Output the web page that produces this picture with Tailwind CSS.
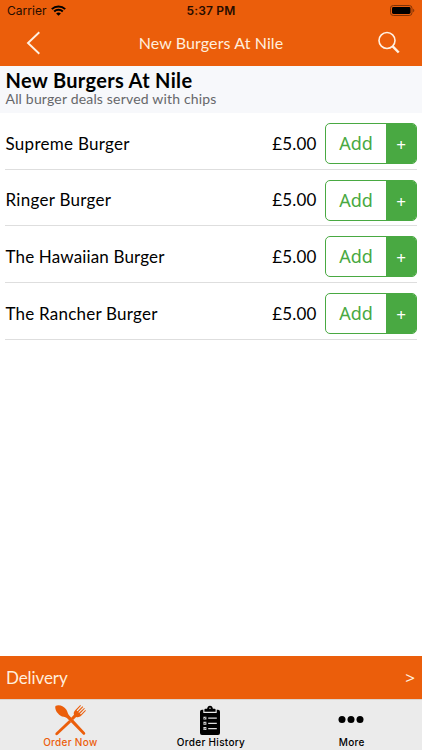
<!DOCTYPE html>
<html lang="en">
<head>
<meta charset="utf-8">
<title>New Burgers At Nile</title>
<script src="https://cdn.jsdelivr.net/npm/@tailwindcss/browser@4"></script>
</head>
<body class="bg-white">
<div class="flex h-[750px] w-[422px] flex-col overflow-hidden bg-white font-['Lato',sans-serif] text-black">
  <header class="h-[65.5px] shrink-0 bg-[#eb5e0b]">
    <div class="grid h-[22px] grid-cols-3 items-center pl-[7px] pr-[7px] font-['Inter',sans-serif] text-[#260c00]">
      <div class="flex items-center gap-[4px] text-[12px] leading-[22px] tracking-[0.05px]">
        <span>Carrier</span>
        <svg class="mb-[2px] h-[11px] w-[15px]" viewBox="0 0 15 11" fill="none" stroke="#000" stroke-width="2"><path d="M.8 4.1C4.5.5 10.5.5 14.2 4.1M3.200 6.500c2.400-2.300 6.200-2.300 8.600 0"/><path d="M7.500 10.800 5.100 8.400c1.400-1.200 3.400-1.200 4.800 0z" fill="#000" stroke="none"/></svg>
      </div>
      <span class="text-center text-[12px] font-semibold leading-[22px] tracking-[0.2px]">5:37 PM</span>
      <svg class="mb-[1px] h-[11px] w-[25px] justify-self-end" viewBox="0 0 25 11"><rect x=".5" y=".5" width="21.500" height="10" rx="2.800" fill="none" stroke="#803307"/><rect x="2" y="2" width="18.500" height="7" rx="1.400"/><path d="M23.200 3.800c1.500.6 1.500 2.800 0 3.400z" fill="#803307"/></svg>
    </div>
    <div class="flex h-[41px] items-center justify-between pl-[26px] pr-[22px]">
      <svg class="h-[24px] w-[15px]" viewBox="0 0 15 24" fill="none" stroke="#fff1e3" stroke-width="1.900"><path d="M13.300 1.200 2 12l11.300 10.800"/></svg>
      <h1 class="ml-[3px] text-[16px] leading-[20px] tracking-[0.1px] text-[#ffeedd]">New Burgers At Nile</h1>
      <svg class="h-[23px] w-[22px]" viewBox="0 0 22 23" fill="none" stroke="#fff1e3"><circle cx="9" cy="9.500" r="8" stroke-width="1.600"/><path d="m14.700 15.300 6 6.200" stroke-width="2.500"/></svg>
    </div>
  </header>
  <section class="h-[47.5px] shrink-0 bg-[#f7f8fb] pl-[5.5px] pt-[3px]">
    <h2 class="text-[20px] font-bold leading-[22px] tracking-[0.32px]">New Burgers At Nile</h2>
    <p class="text-[14px] leading-[16px] tracking-[0.18px] text-[#66676a]">All burger deals served with chips</p>
  </section>
  <main class="flex-1 px-[5px]">
    <div class="flex h-[56.67px] items-center border-b border-[#dedede]">
      <span class="flex-1 pl-[0.5px] pt-[5px] text-[17px] tracking-[0.28px]">Supreme Burger</span>
      <span class="mr-[8.5px] pt-[5px] text-[17px] tracking-[0.15px]">£5.00</span>
      <div class="mt-[5px] flex h-[41px] w-[92px] overflow-hidden rounded-[5px] border border-[#49a942] text-[#49a942]"><span class="flex flex-1 items-center justify-center font-['Noto_Sans'] text-[18px]">Add</span><span class="flex w-[30px] items-center justify-center bg-[#49a942] pt-[2px] font-['Noto_Sans'] text-[17px] text-white">+</span></div>
    </div>
    <div class="flex h-[56.67px] items-center border-b border-[#dedede]">
      <span class="flex-1 pl-[0.5px] pt-[5px] text-[17px] tracking-[0.28px]">Ringer Burger</span>
      <span class="mr-[8.5px] pt-[5px] text-[17px] tracking-[0.15px]">£5.00</span>
      <div class="mt-[6px] flex h-[41px] w-[92px] overflow-hidden rounded-[5px] border border-[#49a942] text-[#49a942]"><span class="flex flex-1 items-center justify-center font-['Noto_Sans'] text-[18px]">Add</span><span class="flex w-[30px] items-center justify-center bg-[#49a942] pt-[2px] font-['Noto_Sans'] text-[17px] text-white">+</span></div>
    </div>
    <div class="flex h-[56.67px] items-center border-b border-[#dedede]">
      <span class="flex-1 pl-[0.5px] pt-[5px] text-[17px] tracking-[0.15px]">The Hawaiian Burger</span>
      <span class="mr-[8.5px] pt-[5px] text-[17px] tracking-[0.15px]">£5.00</span>
      <div class="mt-[5px] flex h-[41px] w-[92px] overflow-hidden rounded-[5px] border border-[#49a942] text-[#49a942]"><span class="flex flex-1 items-center justify-center font-['Noto_Sans'] text-[18px]">Add</span><span class="flex w-[30px] items-center justify-center bg-[#49a942] pt-[2px] font-['Noto_Sans'] text-[17px] text-white">+</span></div>
    </div>
    <div class="flex h-[56.67px] items-center border-b border-[#dedede]">
      <span class="flex-1 pl-[0.5px] pt-[5px] text-[17px] tracking-[0.22px]">The Rancher Burger</span>
      <span class="mr-[8.5px] pt-[5px] text-[17px] tracking-[0.15px]">£5.00</span>
      <div class="mt-[5px] flex h-[41px] w-[92px] overflow-hidden rounded-[5px] border border-[#49a942] text-[#49a942]"><span class="flex flex-1 items-center justify-center font-['Noto_Sans'] text-[18px]">Add</span><span class="flex w-[30px] items-center justify-center bg-[#49a942] pt-[2px] font-['Noto_Sans'] text-[17px] text-white">+</span></div>
    </div>
  </main>
  <div class="flex h-[42.5px] shrink-0 items-center justify-between bg-[#eb5e0b] pl-[6px] pr-[7px] text-[17px] text-[#ffeedd]">
    <span class="tracking-[-0.1px]">Delivery</span><span class="font-['Noto_Sans']">&gt;</span>
  </div>
  <nav class="grid h-[51.5px] shrink-0 grid-cols-3 border-t border-[#dcd3cd] bg-[#ebebeb] font-['Inter',sans-serif] text-[10px] font-medium leading-[12px] tracking-[0.3px]">
    <div class="flex flex-col items-center pt-[4px] text-[#eb5e0b]">
      <svg class="h-[32px] w-[34px]" viewBox="0 0 34 33" fill="#eb5e0b"><path d="M2 2c3.500-2 9 .2 11.300 3.900 1.500 2.400 1.300 4.200 2.900 6L32.400 29.500c1.200 1.600-.7 3.300-2.200 1.800L13.800 14.400c-2-1.800-4.400-.8-6.900-2.600C3.400 9.200 1 5 2 2z"/><path d="m18.100 18.700-13.800 13c-1.600 1.300-3.300-.6-1.900-2.100L16.200 16.600z"/><path d="m18 14.500 3.100-3.400c-.8-2 .2-3.700 2-5.400l4.500-4.700.7.700-4.500 5 .9.800 5.200-5.200.7.700-5 5.400.8.700 5.200-5.100.7.700-5 5.300.9.800 4.600-4.600.6.700-4.700 5c-1.700 1.700-3.600 2.100-5.300 1.400l-3.200 3.200z"/></svg>
      <span>Order Now</span>
    </div>
    <div class="flex flex-col items-center pt-[5px]">
      <svg class="mr-[1px] h-[31px] w-[22px]" viewBox="0 0 22 32" preserveAspectRatio="none"><path d="M3 5h1.300v3.200h13.400V5H19q2 0 2 2v22q0 2-2 2H3q-2 0-2-2V7q0-2 2-2z"/><path d="M5.400 7V4.800q0-1 1-1h1.700C8.500 2 9.300.8 11 .8s2.500 1.200 2.900 3h1.700q1 0 1 1V7z"/><circle cx="11" cy="3.300" r=".7" fill="#eee"/><path d="M4.400 12h3v3h-3zm0 5.400h3v3h-3zm0 5.400h3v3h-3z" fill="#ddd"/><path d="M9.200 13.600h8.600M9.200 19h8.600M9.200 24.400h8.600" stroke="#ddd" stroke-width="1.200"/><path d="m4.900 13.300.7.900 1.400-1.500M4.900 18.700l.7.900L7 18.100M4.900 24.100l.7.900L7 23.500" fill="none" stroke="#000" stroke-width=".6"/></svg>
      <span>Order History</span>
    </div>
    <div class="flex flex-col items-center pt-[4px]">
      <svg class="mr-[1px] h-[32px] w-[26px]" viewBox="0 0 26 32"><circle cx="4" cy="15.500" r="3.500"/><circle cx="13" cy="15.500" r="3.500"/><circle cx="22" cy="15.500" r="3.500"/></svg>
      <span>More</span>
    </div>
  </nav>
</div>
</body>
</html>
